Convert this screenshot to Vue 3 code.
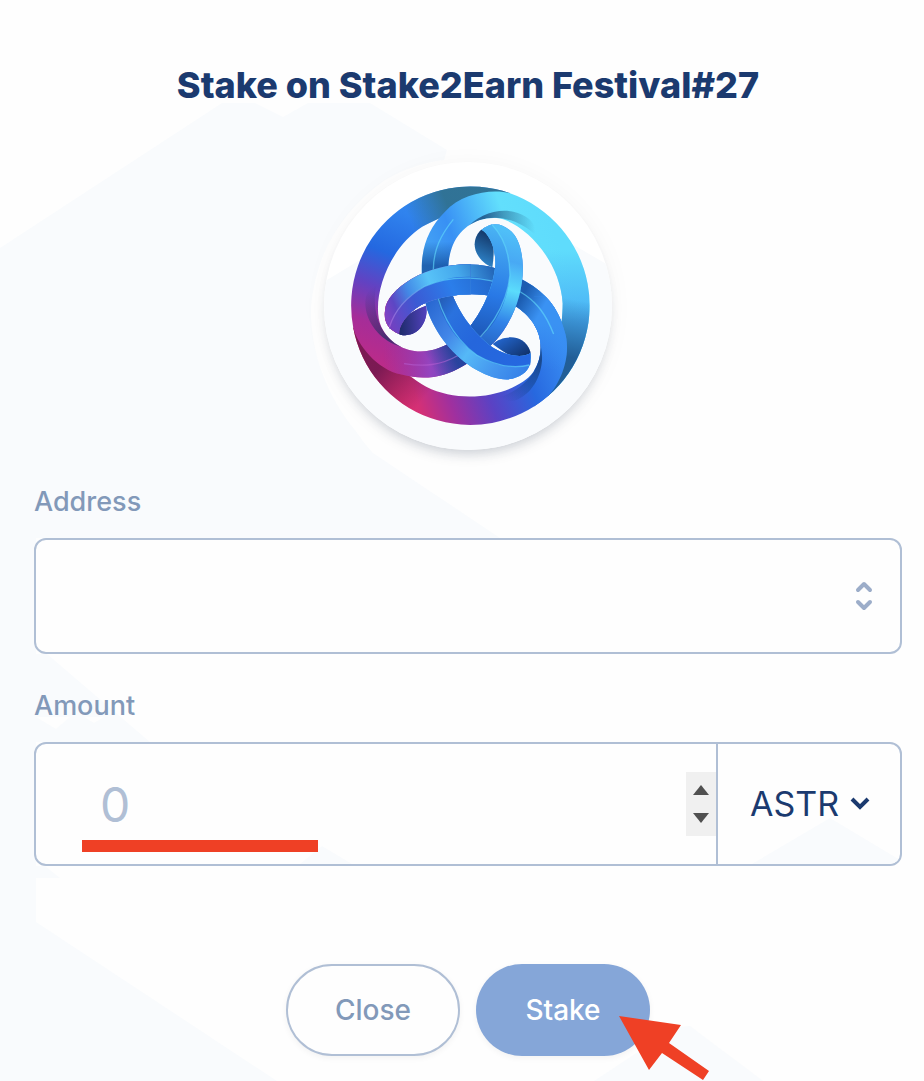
<template>
  <main class="modal">
    <!-- background pattern -->
    <svg class="pattern" viewBox="0 0 924 1081" preserveAspectRatio="none" aria-hidden="true">
      <path d="M0 248 222 103H255L283 117 308 103H370L447 150 444 160C420 163 403 170 385 180C340 212 316 254 311 307C310 352 327 396 355 430C361 438 366 446 373 453L500 538H36V654H47L150 742H36V866H45L60 878H36V922L277 1081H0Z"/>
      <path d="M594 1081 676 1027 690 1026 763 1081Z"/>
      <path class="gap" d="M36 717H70L56 729ZM84 717H104L94 723Z"/>
    </svg>

    <h1 class="title">Stake on Stake2Earn Festival#27</h1>

    <div class="logo">
      <svg viewBox="42 36 864 864" role="img" aria-label="Astar">
        <defs>
          <path id="arm" d="M713 739A357 357 0 0 0 600 130C550 115 455 128 405 185C355 235 335 290 335 360C335 400 340 440 352 480C375 550 430 620 500 660C545 685 590 696 620 682C650 670 667 648 661 610C640 622 600 622 552 595C500 560 445 490 422 420C412 380 412 330 425 295C445 235 500 200 560 204C635 212 750 325 758 460C758 480 757 500 754 522Z"/>
          <path id="tail" d="M342 430C344 448 348 465 352 480C375 550 430 620 500 660C545 685 590 696 620 682C650 670 667 648 661 610C640 622 600 622 552 595C500 560 445 490 422 420Z"/>
          <path id="face" d="M380 430C390 500 430 565 500 615C560 652 610 656 661 644L661 610C640 622 600 622 552 595C500 560 445 490 422 420Z"/>
          <path id="hook" d="M548 582C575 556 642 548 661 605L662 625C630 635 590 615 548 582Z"/>
          <path id="crescent" d="M465 240C500 195 560 175 610 185C650 195 680 215 676 254C640 220 590 203 555 203C520 203 490 215 465 240Z"/>
          <path id="crease" d="M430 208C392 255 370 300 370 360C375 470 430 565 500 615C560 650 610 656 658 645"/>

          <linearGradient id="shade-under" gradientUnits="userSpaceOnUse" x1="375" y1="275" x2="375" y2="515">
            <stop offset="0" stop-color="#0b3f8c" stop-opacity="0"/>
            <stop offset=".3" stop-color="#0b3f8c" stop-opacity=".65"/>
            <stop offset=".75" stop-color="#0b3f8c" stop-opacity=".6"/>
            <stop offset="1" stop-color="#0b3f8c" stop-opacity="0"/>
          </linearGradient>
          <linearGradient id="shade-start-a" gradientUnits="userSpaceOnUse" x1="800" y1="450" x2="770" y2="620">
            <stop offset="0" stop-color="#184a80" stop-opacity="0"/>
            <stop offset="1" stop-color="#184a80" stop-opacity=".8"/>
          </linearGradient>
          <linearGradient id="shade-start-b" gradientUnits="userSpaceOnUse" x1="800" y1="440" x2="785" y2="560">
            <stop offset="0" stop-color="#30708c" stop-opacity="0"/>
            <stop offset="1" stop-color="#30708c" stop-opacity=".9"/>
          </linearGradient>
          <linearGradient id="shade-start-c" gradientUnits="userSpaceOnUse" x1="800" y1="450" x2="775" y2="610">
            <stop offset="0" stop-color="#701750" stop-opacity="0"/>
            <stop offset="1" stop-color="#701750" stop-opacity=".9"/>
          </linearGradient>
          <linearGradient id="shade-crescent" gradientUnits="userSpaceOnUse" x1="465" y1="230" x2="675" y2="225">
            <stop offset="0" stop-color="#0c2d5c" stop-opacity=".35"/>
            <stop offset=".25" stop-color="#0c2d5c" stop-opacity=".65"/>
            <stop offset="1" stop-color="#0c2d5c" stop-opacity="0"/>
          </linearGradient>
          <linearGradient id="shade-hook" gradientUnits="userSpaceOnUse" x1="570" y1="555" x2="620" y2="630">
            <stop offset="0" stop-color="#0c2450" stop-opacity="0"/>
            <stop offset="1" stop-color="#0c2450" stop-opacity=".75"/>
          </linearGradient>

          <linearGradient id="arm-a" gradientUnits="userSpaceOnUse" x1="340" y1="380" x2="730" y2="230">
            <stop offset="0" stop-color="#48a9f4"/>
            <stop offset=".3" stop-color="#3890f4"/>
            <stop offset=".7" stop-color="#62dffc"/>
            <stop offset="1" stop-color="#5fdcfc"/>
          </linearGradient>
          <linearGradient id="right-a" gradientUnits="userSpaceOnUse" x1="780" y1="300" x2="780" y2="520">
            <stop offset="0" stop-color="#48aef4" stop-opacity="0"/>
            <stop offset="1" stop-color="#48aef4"/>
          </linearGradient>
          <linearGradient id="tail-a" gradientUnits="userSpaceOnUse" x1="360" y1="460" x2="650" y2="670">
            <stop offset="0" stop-color="#2a69d2"/>
            <stop offset=".28" stop-color="#4286e8"/>
            <stop offset=".5" stop-color="#55b9f7"/>
            <stop offset=".75" stop-color="#4597ef"/>
            <stop offset="1" stop-color="#347fe8"/>
          </linearGradient>
          <linearGradient id="face-a" gradientUnits="userSpaceOnUse" x1="380" y1="440" x2="650" y2="640">
            <stop offset="0" stop-color="#2258ae"/>
            <stop offset=".2" stop-color="#2a72de"/>
            <stop offset=".5" stop-color="#2566dc"/>
            <stop offset="1" stop-color="#2568e0"/>
          </linearGradient>

          <linearGradient id="arm-b" gradientUnits="userSpaceOnUse" gradientTransform="rotate(120 481 467)" x1="430" y1="120" x2="210" y2="670">
            <stop offset="0" stop-color="#348bf1"/>
            <stop offset=".2" stop-color="#3083ee"/>
            <stop offset=".42" stop-color="#2468e0"/>
            <stop offset=".6" stop-color="#6242c2"/>
            <stop offset=".78" stop-color="#a62d98"/>
            <stop offset="1" stop-color="#c02b86"/>
          </linearGradient>
          <linearGradient id="curl-b" gradientUnits="userSpaceOnUse" gradientTransform="rotate(120 481 467)" x1="220" y1="600" x2="500" y2="600">
            <stop offset="0" stop-color="#9636a8" stop-opacity="0"/>
            <stop offset=".5" stop-color="#9444bf"/>
            <stop offset="1" stop-color="#4050c0"/>
          </linearGradient>
          <linearGradient id="tail-b" gradientUnits="userSpaceOnUse" gradientTransform="rotate(120 481 467)" x1="520" y1="570" x2="610" y2="250">
            <stop offset="0" stop-color="#286bcc"/>
            <stop offset=".2" stop-color="#3182e8"/>
            <stop offset=".5" stop-color="#5bdcfc"/>
            <stop offset=".75" stop-color="#48a9f4"/>
            <stop offset="1" stop-color="#4fbff8"/>
          </linearGradient>
          <linearGradient id="face-b" gradientUnits="userSpaceOnUse" gradientTransform="rotate(120 481 467)" x1="510" y1="560" x2="580" y2="240">
            <stop offset="0" stop-color="#1d58b8"/>
            <stop offset=".4" stop-color="#2979e6"/>
            <stop offset="1" stop-color="#49b2f3"/>
          </linearGradient>
          <linearGradient id="crease-b" gradientUnits="userSpaceOnUse" gradientTransform="rotate(120 481 467)" x1="400" y1="640" x2="530" y2="540">
            <stop offset="0" stop-color="#b45cd0"/>
            <stop offset="1" stop-color="#62dcfb"/>
          </linearGradient>

          <linearGradient id="arm-c" gradientUnits="userSpaceOnUse" gradientTransform="rotate(-120 481 467)" x1="260" y1="740" x2="750" y2="560">
            <stop offset="0" stop-color="#e03070"/>
            <stop offset=".1" stop-color="#d43076"/>
            <stop offset=".28" stop-color="#9f309f"/>
            <stop offset=".5" stop-color="#5a42c4"/>
            <stop offset=".75" stop-color="#2768df"/>
            <stop offset="1" stop-color="#388cf2"/>
          </linearGradient>
          <linearGradient id="curl-c" gradientUnits="userSpaceOnUse" gradientTransform="rotate(-120 481 467)" x1="700" y1="660" x2="700" y2="520">
            <stop offset="0" stop-color="#388cf2" stop-opacity="0"/>
            <stop offset="1" stop-color="#3a92f3"/>
          </linearGradient>
          <linearGradient id="tail-c" gradientUnits="userSpaceOnUse" gradientTransform="rotate(-120 481 467)" x1="560" y1="370" x2="235" y2="510">
            <stop offset="0" stop-color="#2263b6"/>
            <stop offset=".3" stop-color="#45a8ec"/>
            <stop offset=".55" stop-color="#58c3f8"/>
            <stop offset=".75" stop-color="#4389e6"/>
            <stop offset=".9" stop-color="#5c46c4"/>
            <stop offset="1" stop-color="#7d43c4"/>
          </linearGradient>
          <linearGradient id="face-c" gradientUnits="userSpaceOnUse" gradientTransform="rotate(-120 481 467)" x1="550" y1="400" x2="245" y2="540">
            <stop offset="0" stop-color="#2468cc"/>
            <stop offset=".35" stop-color="#2b7eea"/>
            <stop offset=".7" stop-color="#3b5ad4"/>
            <stop offset="1" stop-color="#7440c0"/>
          </linearGradient>
          <linearGradient id="crease-c" gradientUnits="userSpaceOnUse" gradientTransform="rotate(-120 481 467)" x1="240" y1="520" x2="360" y2="400">
            <stop offset="0" stop-color="#b070e0"/>
            <stop offset="1" stop-color="#62dcfb"/>
          </linearGradient>

          <clipPath id="arm-clip"><use href="#arm"/></clipPath>
          <clipPath id="over-clip"><path d="M200 320H482V575H200ZM672 440H850V790H672Z"/></clipPath>

          <g id="arm-c-full">
            <g transform="rotate(120 481 467)">
              <use href="#hook" fill="#5a45c8"/>
              <use href="#hook" fill="url(#shade-hook)"/>
              <use href="#arm" fill="url(#arm-c)"/>
              <g clip-path="url(#arm-clip)">
                <path d="M300 100H640V430H300Z" fill="url(#curl-c)"/>
                <use href="#crescent" fill="url(#shade-crescent)"/>
                <path d="M325 270H440V520H325Z" fill="url(#shade-under)"/>
                <path d="M700 430H850V750H700Z" fill="url(#shade-start-c)"/>
              </g>
              <use href="#tail" fill="url(#tail-c)"/>
              <use href="#face" fill="url(#face-c)"/>
              <use href="#crease" class="crease" stroke="url(#crease-c)"/>
            </g>
          </g>
        </defs>

        <path d="M42 395 200 300 481 120 740 255 906 352V900H42Z" fill="#f9fbfd"/>

        <use href="#arm-c-full"/>

        <g transform="rotate(-120 481 467)">
          <use href="#hook" fill="#3088cf"/>
          <use href="#hook" fill="url(#shade-hook)"/>
          <use href="#arm" fill="url(#arm-b)"/>
          <g clip-path="url(#arm-clip)">
            <path d="M330 130H530V430H330Z" fill="url(#curl-b)"/>
            <use href="#crescent" fill="url(#shade-crescent)"/>
            <path d="M325 270H440V520H325Z" fill="url(#shade-under)"/>
            <path d="M700 410H850V750H700Z" fill="url(#shade-start-b)"/>
          </g>
          <use href="#tail" fill="url(#tail-b)"/>
          <use href="#face" fill="url(#face-b)"/>
          <use href="#crease" class="crease" stroke="url(#crease-b)"/>
        </g>

        <g>
          <use href="#hook" fill="#2469d4"/>
          <use href="#hook" fill="url(#shade-hook)"/>
          <use href="#arm" fill="url(#arm-a)"/>
          <g clip-path="url(#arm-clip)">
            <path d="M700 300H850V750H700Z" fill="url(#right-a)"/>
            <use href="#crescent" fill="url(#shade-crescent)"/>
            <path d="M325 270H440V520H325Z" fill="url(#shade-under)"/>
            <path d="M700 430H850V750H700Z" fill="url(#shade-start-a)"/>
          </g>
          <use href="#tail" fill="url(#tail-a)"/>
          <use href="#face" fill="url(#face-a)"/>
          <use href="#crease" class="crease" stroke="#62dcfb"/>
        </g>

        <g clip-path="url(#over-clip)">
          <use href="#arm-c-full"/>
        </g>
      </svg>
    </div>

    <form class="form" @submit.prevent>
      <div class="field">
        <label for="address">Address</label>
        <div class="box address-box">
          <select id="address" v-model="address">
            <option value=""></option>
          </select>
          <svg class="sort-icon" width="20" height="32" viewBox="0 0 20 32" fill="none" stroke="currentColor" stroke-width="4" stroke-linecap="round" stroke-linejoin="round">
            <polyline points="4,10 10,4 16,10"/>
            <polyline points="4,22 10,28 16,22"/>
          </svg>
        </div>
      </div>

      <div class="field">
        <label for="amount">Amount</label>
        <div class="box amount-box">
          <svg class="peaks" viewBox="0 0 864 120" preserveAspectRatio="none" aria-hidden="true">
            <path d="M264 120 286 102 316 120ZM716 120 794 74 864 116V120Z"/>
          </svg>
          <input id="amount" v-model="amount" type="number" min="0" placeholder="0">
          <span class="marker"></span>
          <div class="spinner">
            <button type="button" aria-label="Increase" @click="step(1)">
              <svg width="16" height="10" viewBox="0 0 16 10"><path d="M0 10 8 0 16 10Z"/></svg>
            </button>
            <button type="button" aria-label="Decrease" @click="step(-1)">
              <svg width="16" height="10" viewBox="0 0 16 10"><path d="M0 0H16L8 10Z"/></svg>
            </button>
          </div>
          <div class="unit">
            <select v-model="unit" aria-label="Unit">
              <option>ASTR</option>
            </select>
            <svg width="20" height="14" viewBox="0 0 20 14" fill="none" stroke="currentColor" stroke-width="4">
              <polyline points="2,2 10,10 18,2"/>
            </svg>
          </div>
        </div>
      </div>

      <div class="actions">
        <button type="button" class="btn btn-close">Close</button>
        <div class="stake-wrap">
          <button type="submit" class="btn btn-stake">Stake</button>
          <svg class="arrow" width="90" height="65" viewBox="0 0 90 65" aria-hidden="true">
            <path d="M0 0 62 9 50 27 90 55 84 64 43 37 30 54Z"/>
          </svg>
        </div>
      </div>
    </form>
  </main>
</template>

<script setup>
import { ref } from 'vue'

const address = ref('')
const amount = ref('')
const unit = ref('ASTR')

function step(n) {
  amount.value = Math.max(0, Number(amount.value || 0) + n)
}
</script>

<style>
body {
  margin: 0;
  background: #fefefe;
}
</style>

<style scoped>
.modal {
  position: relative;
  display: flex;
  flex-direction: column;
  align-items: center;
  padding: 60px 22px 25px 34px;
  font-family: Inter, "Liberation Sans", sans-serif;
  overflow: hidden;
}

.pattern {
  position: absolute;
  inset: 0;
  width: 100%;
  height: 100%;
  z-index: -1;
  fill: #f9fbfd;
}
.pattern .gap { fill: #fefefe; }

.title {
  margin: 0 0 52px;
  font-size: 36px;
  line-height: 50px;
  font-weight: 800;
  color: #1b3a6f;
  text-align: center;
}

.logo {
  width: 288px;
  height: 288px;
  border-radius: 50%;
  overflow: hidden;
  background: #fff;
  box-shadow: 0 8px 12px -4px rgba(30, 50, 80, 0.2), 0 2px 24px rgba(0, 0, 0, 0.04);
}
.logo svg { display: block; width: 100%; height: 100%; }
.crease {
  fill: none;
  stroke-width: 4;
  stroke-opacity: 0.6;
}

.form {
  display: flex;
  flex-direction: column;
  gap: 34px;
  width: 100%;
  margin-top: 34px;
}

.field {
  display: flex;
  flex-direction: column;
  gap: 18px;
}
.field label {
  font-size: 27px;
  line-height: 36px;
  font-weight: 500;
  color: #8299b9;
}

.box {
  position: relative;
  display: flex;
  align-items: center;
  box-sizing: border-box;
  background: #fefefe;
  border: 2px solid #b0bfd5;
  border-radius: 12px;
  overflow: hidden;
}

select,
input {
  appearance: none;
  border: 0;
  outline: 0;
  margin: 0;
  padding: 0;
  background: transparent;
  font-family: inherit;
  color: #1b3a6f;
}

.address-box { height: 116px; }
.address-box select {
  flex: 1;
  height: 100%;
  padding: 0 80px 0 32px;
  font-size: 27px;
}
.sort-icon {
  position: absolute;
  right: 26px;
  color: #9cadc9;
  pointer-events: none;
}

.amount-box { height: 124px; }
.peaks {
  position: absolute;
  inset: 0;
  width: 100%;
  height: 100%;
  fill: #f9fbfd;
}
.amount-box input {
  position: relative;
  flex: 1;
  min-width: 0;
  height: 100%;
  padding-left: 64px;
  font-size: 48px;
  appearance: textfield;
}
.amount-box input::placeholder { color: #b0bfd5; opacity: 1; }
.amount-box input::-webkit-inner-spin-button { appearance: none; }

/* underline highlight below the value */
.marker {
  position: absolute;
  left: 46px;
  bottom: 12px;
  width: 236px;
  height: 12px;
  background: #ef4025;
}

.spinner {
  position: relative;
  display: flex;
  flex-direction: column;
  gap: 18px;
  justify-content: center;
  width: 30px;
  height: 64px;
  background: #f0f0f0;
}
.spinner button {
  display: flex;
  justify-content: center;
  padding: 0;
  border: 0;
  background: transparent;
}
.spinner svg { fill: #505050; }

.unit {
  position: relative;
  display: flex;
  align-items: center;
  gap: 10px;
  height: 100%;
  padding: 0 30px 0 32px;
  border-left: 2px solid #b0bfd5;
  color: #1b3a6f;
}
.unit select {
  font-size: 34px;
  line-height: 44px;
}

.actions {
  display: flex;
  justify-content: center;
  gap: 16px;
  margin-top: 64px;
}
.btn {
  box-sizing: border-box;
  width: 174px;
  height: 92px;
  border-radius: 46px;
  font-family: inherit;
  font-size: 28px;
  font-weight: 500;
  box-shadow: 0 2px 6px rgba(0, 0, 0, 0.05);
  cursor: pointer;
}
.btn-close {
  border: 2px solid #b0bfd5;
  background: #fefefe;
  color: #8299b9;
}
.btn-stake {
  border: 0;
  background: #85a6d8;
  color: #fff;
}

.stake-wrap { position: relative; }
.arrow {
  position: absolute;
  left: 143px;
  top: 52px;
  fill: #ef4025;
}
</style>
